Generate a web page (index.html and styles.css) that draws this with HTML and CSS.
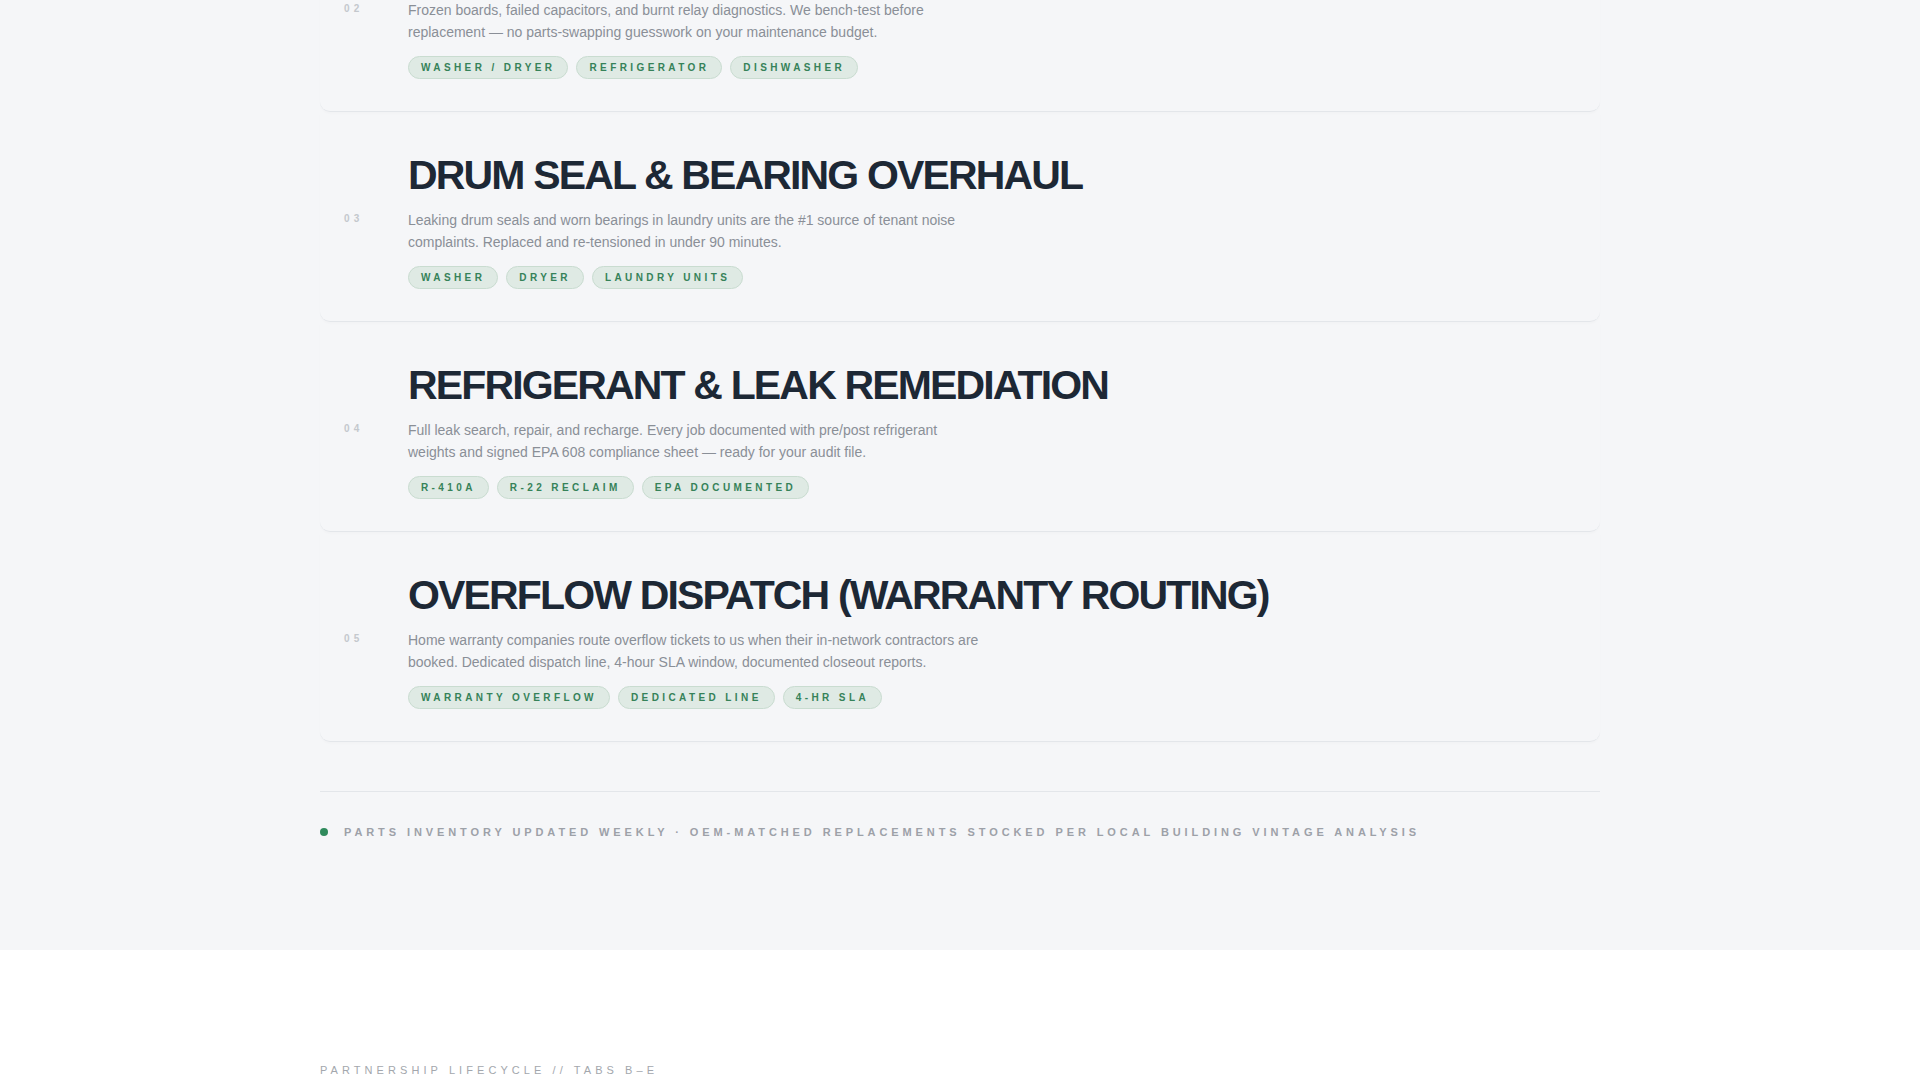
FILE: index.html
```html
<!DOCTYPE html>
<html lang="en">
<head>
<meta charset="utf-8">
<title>Services</title>
<link rel="stylesheet" href="styles.css">
</head>
<body>
<section class="services">
  <div class="wrap">
    <div class="list">
      <article class="row">
        <div class="num">02</div>
        <div class="body">
          <h3 class="title">CONTROL BOARD &amp; ELECTRONICS REPAIR</h3>
          <p class="desc">Frozen boards, failed capacitors, and burnt relay diagnostics. We bench-test before replacement — no parts-swapping guesswork on your maintenance budget.</p>
          <ul class="tags">
            <li class="tag">Washer / Dryer</li>
            <li class="tag">Refrigerator</li>
            <li class="tag">Dishwasher</li>
          </ul>
        </div>
      </article>
      <article class="row">
        <div class="num">03</div>
        <div class="body">
          <h3 class="title">DRUM SEAL &amp; BEARING OVERHAUL</h3>
          <p class="desc">Leaking drum seals and worn bearings in laundry units are the #1 source of tenant noise complaints. Replaced and re-tensioned in under 90 minutes.</p>
          <ul class="tags">
            <li class="tag">Washer</li>
            <li class="tag">Dryer</li>
            <li class="tag">Laundry Units</li>
          </ul>
        </div>
      </article>
      <article class="row">
        <div class="num">04</div>
        <div class="body">
          <h3 class="title">REFRIGERANT &amp; LEAK REMEDIATION</h3>
          <p class="desc">Full leak search, repair, and recharge. Every job documented with pre/post refrigerant weights and signed EPA 608 compliance sheet — ready for your audit file.</p>
          <ul class="tags">
            <li class="tag">R-410A</li>
            <li class="tag">R-22 Reclaim</li>
            <li class="tag">EPA Documented</li>
          </ul>
        </div>
      </article>
      <article class="row">
        <div class="num">05</div>
        <div class="body">
          <h3 class="title">OVERFLOW DISPATCH (WARRANTY ROUTING)</h3>
          <p class="desc">Home warranty companies route overflow tickets to us when their in-network contractors are booked. Dedicated dispatch line, 4-hour SLA window, documented closeout reports.</p>
          <ul class="tags">
            <li class="tag">Warranty Overflow</li>
            <li class="tag">Dedicated Line</li>
            <li class="tag">4-HR SLA</li>
          </ul>
        </div>
      </article>
    </div>
    <div class="note">
      <span class="dot"></span>
      <span class="note-text">Parts inventory updated weekly · OEM-matched replacements stocked per local building vintage analysis</span>
    </div>
  </div>
</section>
<section class="lifecycle">
  <div class="wrap">
    <div class="eyebrow">Partnership Lifecycle // Tabs B–E</div>
  </div>
</section>
</body>
</html>
```

FILE: styles.css
```css
* { box-sizing: border-box; }
html, body {
  margin: 0;
  padding: 0;
}
body {
  font-family: "Liberation Sans", Arial, sans-serif;
  background: #ffffff;
  overflow: hidden;
}
.wrap {
  width: 1280px;
  margin: 0 auto;
}
.services {
  background: #f5f6f8;
  padding-bottom: 110px;
}
.list {
  margin-top: -98px;
}
.row {
  display: grid;
  grid-template-columns: 88px 1fr;
  align-items: center;
  padding: 41px 0 32px 0;
  border-bottom: 1px solid #e3e6ea;
  border-radius: 0 0 10px 10px;
  box-shadow: 0 2px 2px rgba(20, 30, 40, 0.015);
}
.num {
  padding-left: 24px;
  padding-bottom: 5px;
  font-size: 10px;
  font-weight: 700;
  letter-spacing: 0.42em;
  color: #c4c8cd;
  line-height: 14px;
}
.title {
  margin: 0 0 11px 0;
  font-size: 41px;
  line-height: 45px;
  font-weight: 700;
  letter-spacing: -0.045em;
  color: #1d2835;
}
.desc {
  margin: 0 0 13px 0;
  max-width: 576px;
  font-size: 14px;
  line-height: 22px;
  color: #8a8f97;
}
.tags {
  display: flex;
  gap: 8px;
  margin: 0;
  padding: 0;
  list-style: none;
}
.tag {
  padding: 5px 12px;
  font-size: 10px;
  line-height: 11px;
  font-weight: 700;
  letter-spacing: 0.34em;
  text-transform: uppercase;
  color: #368259;
  background: #dfeae4;
  border: 1px solid #c9dcd0;
  border-radius: 999px;
}
.note {
  margin-top: 49px;
  border-top: 1px solid #e3e6ea;
  padding-top: 32px;
  display: flex;
  align-items: center;
  gap: 16px;
}
.dot {
  width: 8px;
  height: 8px;
  border-radius: 50%;
  background: #2f8a5c;
  flex: none;
}
.note-text {
  font-size: 11px;
  line-height: 16px;
  font-weight: 700;
  letter-spacing: 0.355em;
  text-transform: uppercase;
  color: #9da1a8;
}
.lifecycle {
  background: #ffffff;
  padding-top: 112px;
  padding-bottom: 80px;
}
.eyebrow {
  font-size: 11px;
  line-height: 16px;
  font-weight: 400;
  letter-spacing: 0.37em;
  text-transform: uppercase;
  color: #a3a7ad;
}
```
